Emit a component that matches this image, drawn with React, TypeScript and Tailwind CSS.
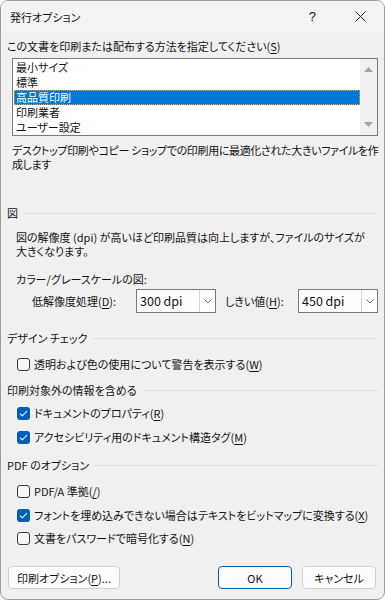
import React from 'react';

const font = "[font-family:'Noto_Sans_CJK_JP',sans-serif] [font-feature-settings:'palt']";

function Acc({ k }: { k: string }) {
  return (
    <>
      (<span className="underline underline-offset-2">{k}</span>)
    </>
  );
}

function SectionHead({ title }: { title: string }) {
  return (
    <div className="flex h-[16px] items-center gap-[6px]">
      <span className="whitespace-nowrap">{title}</span>
      <div className="h-px flex-1 bg-[#dadada]" />
    </div>
  );
}

function CheckRow({ checked, children }: { checked?: boolean; children: React.ReactNode }) {
  return (
    <div className="ml-[10px] flex h-[20px] items-center gap-[4px]">
      {checked ? (
        <div className="flex h-[13px] w-[13px] items-center justify-center rounded-[3px] bg-[#005fb8]">
          <svg width="9" height="7" viewBox="0 0 9 7" fill="none">
            <path d="M1 3.6 L3.3 5.8 L8 1.2" stroke="white" strokeWidth="1.1" />
          </svg>
        </div>
      ) : (
        <div className="h-[13px] w-[13px] rounded-[3px] border border-[#3c3c3c] bg-[#f7f7f7]" />
      )}
      <span className="whitespace-nowrap">{children}</span>
    </div>
  );
}

function Combo({ value }: { value: string }) {
  return (
    <div className="flex h-[24px] w-[80px] border border-[#7a7a7a] bg-white">
      <div className="flex flex-1 items-center pl-[3px] text-[12.5px]">{value}</div>
      <div className="flex w-[16px] items-center justify-center border-l border-[#d4d4d4]">
        <svg width="8" height="5" viewBox="0 0 8 5" fill="none">
          <path d="M0.5 0.5 L4 4 L7.5 0.5" stroke="#6b6b6b" strokeWidth="1" />
        </svg>
      </div>
    </div>
  );
}

export default function App() {
  const items = ['最小サイズ', '標準', '高品質印刷', '印刷業者', 'ユーザー設定'];
  const selected = 2;

  return (
    <div className={`${font} h-[600px] w-[385px] overflow-hidden rounded-[8px] border border-[#9c9c9c] bg-[#f0f0f0] text-[11px] leading-[14px] text-[#141414]`}>
      <div className="flex h-[31px] items-center bg-[#f3f3f3] pl-[9px]">
        <span className="flex-1">発行オプション</span>
        <span className="mr-[39px] text-[13px] [font-family:'Liberation_Sans',sans-serif]">?</span>
        <svg width="11" height="11" viewBox="0 0 11 11" className="mr-[18px]">
          <path d="M0.5 0.5 L10.5 10.5 M10.5 0.5 L0.5 10.5" stroke="#1a1a1a" strokeWidth="1" />
        </svg>
      </div>

      <div className="px-[6px] pt-[4px]">
        <div className="flex h-[20px] items-center">
          この文書を印刷または配布する方法を指定してください<Acc k="S" />
        </div>

        <div className="ml-[5px] mt-[2px] flex h-[78px] border border-[#7a7a7a] bg-white">
          <div className="flex-1 pl-px pt-[1px]">
            {items.map((it, i) => (
              <div
                key={it}
                className={
                  i === selected
                    ? 'h-[15px] border border-dotted border-[#f2a03c] bg-[#0078d7] pl-[1px] leading-[13px] text-white'
                    : 'h-[15px] pl-[2px] leading-[15px]'
                }
              >
                {it}
              </div>
            ))}
          </div>
          <div className="flex w-[17px] flex-col items-center justify-between bg-[#f0f0f0] py-[8px]">
            <svg width="9" height="5" viewBox="0 0 9 5">
              <path d="M0 5 L4.5 0 L9 5 Z" fill="#a3a3a3" />
            </svg>
            <svg width="9" height="5" viewBox="0 0 9 5">
              <path d="M0 0 L9 0 L4.5 5 Z" fill="#a3a3a3" />
            </svg>
          </div>
        </div>

        <p className="ml-[5px] mt-[7px] whitespace-nowrap leading-[14px] tracking-[-0.35px]">
          デスクトップ印刷やコピー ショップでの印刷用に最適化された大きいファイルを作
          <br />
          成します
        </p>

        <div className="mt-[34px]">
          <SectionHead title="図" />
        </div>

        <p className="ml-[9px] mt-[9px] whitespace-nowrap leading-[14px]">
          図の解像度 (dpi) が高いほど印刷品質は向上しますが、ファイルのサイズが
          <br />
          大きくなります。
        </p>

        <div className="ml-[9px] mt-[13px] flex h-[16px] items-center">カラー/グレースケールの図:</div>

        <div className="mt-[2px] flex items-center">
          <span className="ml-[25px] w-[104px] whitespace-nowrap">
            低解像度処理<Acc k="D" />:
          </span>
          <Combo value="300 dpi" />
          <span className="ml-[9px] w-[73px] whitespace-nowrap">
            しきい値<Acc k="H" />:
          </span>
          <Combo value="450 dpi" />
        </div>

        <div className="mt-[17px]">
          <SectionHead title="デザイン チェック" />
        </div>
        <div className="mt-[8px]">
          <CheckRow>
            透明および色の使用について警告を表示する<Acc k="W" />
          </CheckRow>
        </div>

        <div className="mt-[8px]">
          <SectionHead title="印刷対象外の情報を含める" />
        </div>
        <div className="mt-[5px]">
          <CheckRow checked>
            ドキュメントのプロパティ<Acc k="R" />
          </CheckRow>
        </div>
        <div className="mt-[4px]">
          <CheckRow checked>
            アクセシビリティ用のドキュメント構造タグ<Acc k="M" />
          </CheckRow>
        </div>

        <div className="mt-[10px]">
          <SectionHead title="PDF のオプション" />
        </div>
        <div className="mt-[8px]">
          <CheckRow>
            PDF/A 準拠<Acc k="/" />
          </CheckRow>
        </div>
        <div className="mt-[4px]">
          <CheckRow checked>
            フォントを埋め込みできない場合はテキストをビットマップに変換する<Acc k="X" />
          </CheckRow>
        </div>
        <div className="mt-[3px]">
          <CheckRow>
            文書をパスワードで暗号化する<Acc k="N" />
          </CheckRow>
        </div>

        <div className="mt-[18px] flex items-center pr-[2px]">
          <button className="ml-px h-[23px] w-[112px] rounded-[4px] border border-[#d0d0d0] bg-[#fdfdfd]">
            印刷オプション<Acc k="P" />...
          </button>
          <div className="flex-1" />
          <button className="h-[23px] w-[74px] rounded-[4px] border border-[#005fb8] bg-[#fdfdfd]">OK</button>
          <button className="ml-[10px] h-[23px] w-[74px] rounded-[4px] border border-[#d0d0d0] bg-[#fdfdfd]">
            キャンセル
          </button>
        </div>
      </div>
    </div>
  );
}
